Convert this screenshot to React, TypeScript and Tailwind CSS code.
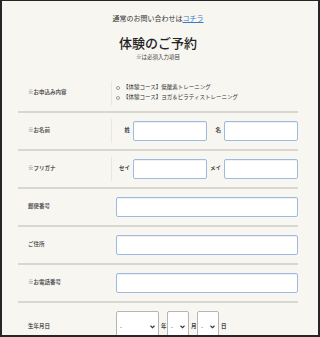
import React from "react";

const jp = { fontFamily: '"Noto Sans CJK JP", "Noto Sans", sans-serif' };

function Input({ className = "" }: { className?: string }) {
  return (
    <div
      className={`h-[20px] bg-white border border-[#9dbbe0] rounded-[2px] shadow-[inset_0_1px_1px_rgba(0,0,0,0.06)] ${className}`}
    />
  );
}

function Select({ w }: { w: string }) {
  return (
    <div
      className={`${w} h-[32px] bg-white border border-[#b5b5b5] rounded-[2px] flex items-center justify-between pl-[3px] pr-[3px] shrink-0`}
    >
      <span className="text-[6px] text-[#444] leading-none">-</span>
      <svg width="5" height="4" viewBox="0 0 10 8" className="shrink-0">
        <path d="M1 1.5 L5 5.5 L9 1.5" fill="none" stroke="#333" strokeWidth="2.2" />
      </svg>
    </div>
  );
}

function Row({
  label,
  divider = false,
  tall = false,
  children,
}: {
  label: string;
  divider?: boolean;
  tall?: boolean;
  children: React.ReactNode;
}) {
  return (
    <div className={`flex items-stretch ${tall ? "h-[48px]" : "h-[36px]"}`}>
      <div
        className={`w-[94px] shrink-0 flex items-center pl-[10px] my-[6px] border-r ${
          divider ? "border-[#e9e7e0]" : "border-transparent"
        }`}
      >
        <span className="text-[5.5px] font-bold text-[#5a5a5a] leading-none whitespace-nowrap">{label}</span>
      </div>
      <div className="flex-1 flex items-center pl-[4px]">{children}</div>
    </div>
  );
}

function Sep() {
  return <div className="h-[2px] bg-[#d9d7cf]" />;
}

export default function App() {
  return (
    <div
      className="w-[320px] h-[337px] overflow-hidden bg-[#f7f6f1] border-t border-l-2 border-r-2 border-b-2 border-[#262626] box-border"
      style={jp}
    >
      <div className="pl-[16px] pr-[20px]">
        <div className="pt-[12px] text-center text-[7px] leading-[10px] text-[#333]">
          通常のお問い合わせは
          <span className="text-[#3a7cc4] underline">コチラ</span>
        </div>
        <div className="mt-[12px] text-center text-[13px] leading-[16px] font-medium text-[#222]">
          体験のご予約
        </div>
        <div className="mt-[2px] text-center text-[5.5px] leading-[8px] text-[#444]">
          ※は必須入力項目
        </div>

        <div className="mt-[14px]">
          <Row label="※お申込み内容" divider>
            <div className="flex flex-col gap-[3px]">
              {["【体験コース】低酸素トレーニング", "【体験コース】ヨガ＆ピラティストレーニング"].map((t) => (
                <div key={t} className="flex items-center h-[7px]">
                  <span className="w-[4px] h-[4px] rounded-full border border-[#9a9a9a] bg-white shrink-0" />
                  <span className="ml-[3px] text-[5.5px] leading-none text-[#333] whitespace-nowrap">{t}</span>
                </div>
              ))}
            </div>
          </Row>
          <Sep />
          <Row label="※お名前" divider>
            <span className="w-[14px] text-right text-[5.5px] font-bold text-[#444] leading-none">姓</span>
            <Input className="ml-[3px] w-[74px] shrink-0" />
            <span className="w-[14px] text-right text-[5.5px] font-bold text-[#444] leading-none">名</span>
            <Input className="ml-[3px] flex-1" />
          </Row>
          <Sep />
          <Row label="※フリガナ" divider>
            <span className="w-[14px] text-right text-[5.5px] font-bold text-[#444] leading-none">セイ</span>
            <Input className="ml-[3px] w-[74px] shrink-0" />
            <span className="w-[14px] text-right text-[5.5px] font-bold text-[#444] leading-none">メイ</span>
            <Input className="ml-[3px] flex-1" />
          </Row>
          <Sep />
          <Row label="郵便番号">
            <Input className="flex-1" />
          </Row>
          <Sep />
          <Row label="ご住所">
            <Input className="flex-1" />
          </Row>
          <Sep />
          <Row label="※お電話番号">
            <Input className="flex-1" />
          </Row>
          <Sep />
          <Row label="生年月日" tall>
            <Select w="w-[43px]" />
            <span className="ml-[2px] w-[6px] text-[5.5px] font-bold text-[#444] leading-none">年</span>
            <Select w="w-[22px]" />
            <span className="ml-[2px] w-[6px] text-[5.5px] font-bold text-[#444] leading-none">月</span>
            <Select w="w-[22px]" />
            <span className="ml-[2px] text-[5.5px] font-bold text-[#444] leading-none">日</span>
          </Row>
        </div>
      </div>
    </div>
  );
}
